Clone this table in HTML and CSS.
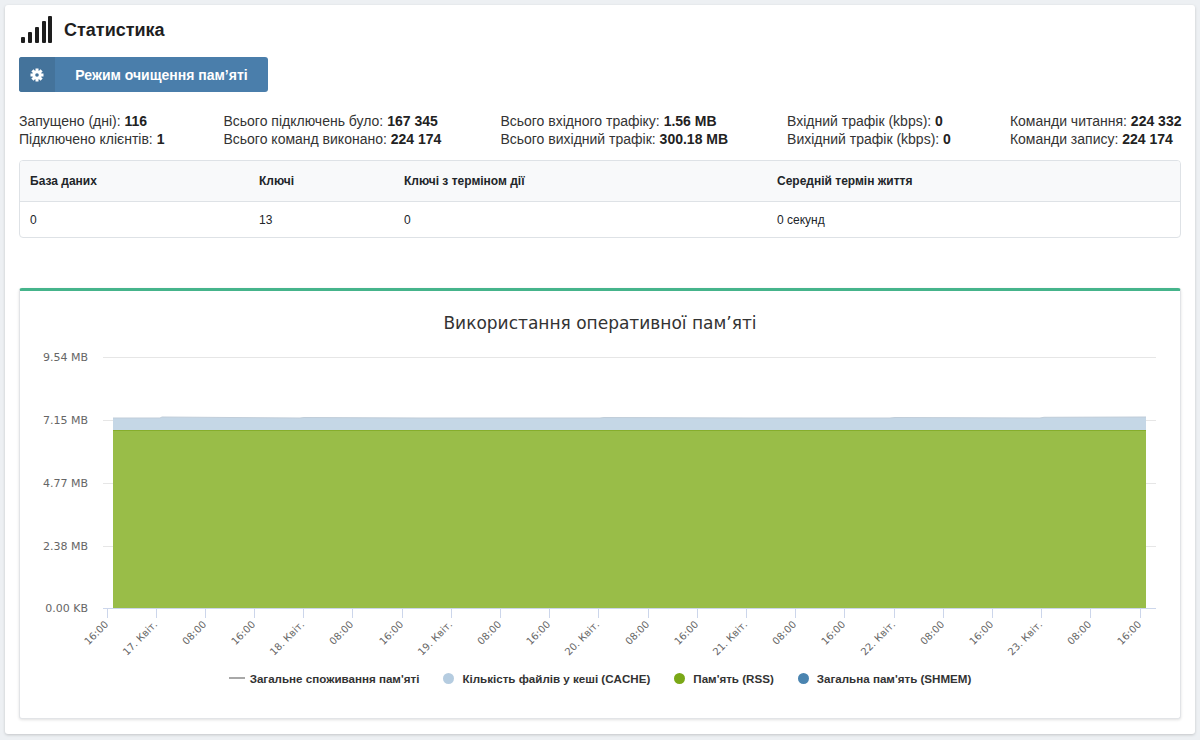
FILE: index.html
```html
<!DOCTYPE html>
<html lang="uk">
<head>
<meta charset="utf-8">
<title>Статистика</title>
<link rel="stylesheet" href="styles.css">
</head>
<body>
<div class="page-card">
  <div class="header">
    <svg class="signal" width="32" height="28" viewBox="0 0 32 28">
      <rect x="1" y="21" width="4" height="6" rx="1"/>
      <rect x="8" y="16" width="4" height="11" rx="1"/>
      <rect x="15" y="11" width="4" height="16" rx="1"/>
      <rect x="22" y="5" width="4" height="22" rx="1"/>
      <rect x="28" y="0" width="4" height="27" rx="1"/>
    </svg>
    <h1 class="title">Статистика</h1>
  </div>

  <button class="btn-labeled" type="button">
    <span class="btn-icon">
      <svg width="14" height="14" viewBox="-7 -7 14 14">
        <g fill="#fff">
          <circle r="4.6"/>
          <rect x="-1.5" y="-6.5" width="3" height="3"/>
          <rect x="-1.5" y="-6.5" width="3" height="3" transform="rotate(45)"/>
          <rect x="-1.5" y="-6.5" width="3" height="3" transform="rotate(90)"/>
          <rect x="-1.5" y="-6.5" width="3" height="3" transform="rotate(135)"/>
          <rect x="-1.5" y="-6.5" width="3" height="3" transform="rotate(180)"/>
          <rect x="-1.5" y="-6.5" width="3" height="3" transform="rotate(225)"/>
          <rect x="-1.5" y="-6.5" width="3" height="3" transform="rotate(270)"/>
          <rect x="-1.5" y="-6.5" width="3" height="3" transform="rotate(315)"/>
        </g>
        <circle r="1.8" fill="#44739b"/>
      </svg>
    </span>
    <span class="btn-text">Режим очищення пам’яті</span>
  </button>

  <div class="stats">
    <div class="stat-col">
      <div>Запущено (дні): <b>116</b></div>
      <div>Підключено клієнтів: <b>1</b></div>
    </div>
    <div class="stat-col">
      <div>Всього підключень було: <b>167 345</b></div>
      <div>Всього команд виконано: <b>224 174</b></div>
    </div>
    <div class="stat-col">
      <div>Всього вхідного трафіку: <b>1.56 MB</b></div>
      <div>Всього вихідний трафік: <b>300.18 MB</b></div>
    </div>
    <div class="stat-col">
      <div>Вхідний трафік (kbps): <b>0</b></div>
      <div>Вихідний трафік (kbps): <b>0</b></div>
    </div>
    <div class="stat-col">
      <div>Команди читання: <b>224 332</b></div>
      <div>Команди запису: <b>224 174</b></div>
    </div>
  </div>

  <div class="table-wrap">
    <table class="db-table">
      <colgroup>
        <col class="c1"><col class="c2"><col class="c3"><col>
      </colgroup>
      <thead>
        <tr><th>База даних</th><th>Ключі</th><th>Ключі з терміном дії</th><th>Середній термін життя</th></tr>
      </thead>
      <tbody>
        <tr><td>0</td><td>13</td><td>0</td><td>0 секунд</td></tr>
      </tbody>
    </table>
  </div>

  <div class="chart-card">
    <svg class="chart" width="1159" height="369" viewBox="20 291 1159 369">
      <text class="chart-title" x="600" y="329">Використання оперативної пам’яті</text>

      <g class="grid">
        <line x1="103" y1="357.5" x2="1156" y2="357.5"/>
        <line x1="103" y1="420.5" x2="1156" y2="420.5"/>
        <line x1="103" y1="483.5" x2="1156" y2="483.5"/>
        <line x1="103" y1="546.5" x2="1156" y2="546.5"/>
      </g>

      <g class="ylabels">
        <text x="88" y="361">9.54 MB</text>
        <text x="88" y="424">7.15 MB</text>
        <text x="88" y="487">4.77 MB</text>
        <text x="88" y="550">2.38 MB</text>
        <text x="88" y="612">0.00 KB</text>
      </g>

      <path class="area-cache" d="M113,418 L160,418 L162,417 L300,418 L304,417.5 L420,418 L600,418 L604,417.5 L750,418 L890,418 L895,417.5 L1040,418 L1044,417.3 L1146,417 L1146,430 L113,430 Z"/>
      <path class="line-total" d="M113,418 L160,418 L162,417 L300,418 L304,417.5 L420,418 L600,418 L604,417.5 L750,418 L890,418 L895,417.5 L1040,418 L1044,417.3 L1146,417"/>
      <path class="area-rss" d="M113,430 L1146,430 L1146,608 L113,608 Z"/>
      <path class="line-rss" d="M113,430.5 L1146,430.5"/>

      <line class="xaxis" x1="103" y1="608.5" x2="1156" y2="608.5"/>
      <g class="xticks">
        <line x1="107.5" y1="608" x2="107.5" y2="618"/>
        <line x1="156.5" y1="608" x2="156.5" y2="618"/>
        <line x1="205.5" y1="608" x2="205.5" y2="618"/>
        <line x1="254.5" y1="608" x2="254.5" y2="618"/>
        <line x1="303.5" y1="608" x2="303.5" y2="618"/>
        <line x1="352.5" y1="608" x2="352.5" y2="618"/>
        <line x1="402.5" y1="608" x2="402.5" y2="618"/>
        <line x1="451.5" y1="608" x2="451.5" y2="618"/>
        <line x1="500.5" y1="608" x2="500.5" y2="618"/>
        <line x1="549.5" y1="608" x2="549.5" y2="618"/>
        <line x1="598.5" y1="608" x2="598.5" y2="618"/>
        <line x1="648.5" y1="608" x2="648.5" y2="618"/>
        <line x1="697.5" y1="608" x2="697.5" y2="618"/>
        <line x1="746.5" y1="608" x2="746.5" y2="618"/>
        <line x1="795.5" y1="608" x2="795.5" y2="618"/>
        <line x1="844.5" y1="608" x2="844.5" y2="618"/>
        <line x1="894.5" y1="608" x2="894.5" y2="618"/>
        <line x1="943.5" y1="608" x2="943.5" y2="618"/>
        <line x1="992.5" y1="608" x2="992.5" y2="618"/>
        <line x1="1041.5" y1="608" x2="1041.5" y2="618"/>
        <line x1="1090.5" y1="608" x2="1090.5" y2="618"/>
        <line x1="1140.5" y1="608" x2="1140.5" y2="618"/>
      </g>
      <g class="xlabels">
        <text transform="translate(109,625) rotate(-45)">16:00</text>
        <text transform="translate(158,625) rotate(-45)">17. Квіт.</text>
        <text transform="translate(207,625) rotate(-45)">08:00</text>
        <text transform="translate(256,625) rotate(-45)">16:00</text>
        <text transform="translate(305,625) rotate(-45)">18. Квіт.</text>
        <text transform="translate(354,625) rotate(-45)">08:00</text>
        <text transform="translate(404,625) rotate(-45)">16:00</text>
        <text transform="translate(453,625) rotate(-45)">19. Квіт.</text>
        <text transform="translate(502,625) rotate(-45)">08:00</text>
        <text transform="translate(551,625) rotate(-45)">16:00</text>
        <text transform="translate(600,625) rotate(-45)">20. Квіт.</text>
        <text transform="translate(650,625) rotate(-45)">08:00</text>
        <text transform="translate(699,625) rotate(-45)">16:00</text>
        <text transform="translate(748,625) rotate(-45)">21. Квіт.</text>
        <text transform="translate(797,625) rotate(-45)">08:00</text>
        <text transform="translate(846,625) rotate(-45)">16:00</text>
        <text transform="translate(896,625) rotate(-45)">22. Квіт.</text>
        <text transform="translate(945,625) rotate(-45)">08:00</text>
        <text transform="translate(994,625) rotate(-45)">16:00</text>
        <text transform="translate(1043,625) rotate(-45)">23. Квіт.</text>
        <text transform="translate(1092,625) rotate(-45)">08:00</text>
        <text transform="translate(1142,625) rotate(-45)">16:00</text>
      </g>
    </svg>
    <div class="legend">
      <div class="legend-item"><span class="sym-line"></span>Загальне споживання пам'яті</div>
      <div class="legend-item"><span class="sym-dot dot-cache"></span>Кількість файлів у кеші (CACHE)</div>
      <div class="legend-item"><span class="sym-dot dot-rss"></span>Пам'ять (RSS)</div>
      <div class="legend-item"><span class="sym-dot dot-shmem"></span>Загальна пам'ять (SHMEM)</div>
    </div>
  </div>
</div>
</body>
</html>
```

FILE: styles.css
```css
html, body {
  margin: 0;
  padding: 0;
}
body {
  background: #edf0f3;
  font-family: "Liberation Sans", Arial, sans-serif;
  color: #333;
  height: 740px;
  overflow: hidden;
}
.page-card {
  margin: 5px;
  background: #fff;
  border-radius: 3px;
  box-shadow: 0 1px 3px rgba(0, 0, 0, 0.18);
  padding: 8px 14px 15px;
}
.header {
  display: flex;
  align-items: center;
  gap: 12px;
  height: 34px;
}
.signal {
  display: block;
  margin-left: 1px;
  fill: #1e1e1e;
}
.title {
  margin: 0;
  font-size: 18px;
  font-weight: bold;
  color: #1e1e1e;
}
.btn-labeled {
  display: flex;
  align-items: stretch;
  margin-top: 10px;
  width: 249px;
  height: 35px;
  padding: 0;
  border: none;
  border-radius: 3px;
  background: #4a7eab;
  color: #fff;
  font-family: "Liberation Sans", Arial, sans-serif;
  font-size: 14px;
  font-weight: bold;
  overflow: hidden;
}
.btn-icon {
  width: 36px;
  background: #44739b;
  display: flex;
  align-items: center;
  justify-content: center;
}
.btn-icon svg {
  display: block;
}
.btn-text {
  flex: 1;
  display: flex;
  align-items: center;
  justify-content: center;
}
.stats {
  display: flex;
  gap: 59px;
  margin-top: 20px;
  font-size: 14px;
  line-height: 18px;
  color: #333;
}
.stat-col {
  flex-shrink: 0;
  white-space: nowrap;
}
.stats b {
  color: #222;
}
.table-wrap {
  margin-top: 12px;
  border: 1px solid #dee2e6;
  border-radius: 4px;
  overflow: hidden;
}
.db-table {
  width: 100%;
  border-collapse: collapse;
  font-size: 12px;
  color: #212529;
}
.db-table .c1 { width: 229px; }
.db-table .c2 { width: 145px; }
.db-table .c3 { width: 373px; }
.db-table th {
  text-align: left;
  font-weight: bold;
  height: 40px;
  padding: 0 0 0 10px;
  background: #f8f9fa;
  border-bottom: 1px solid #dee2e6;
}
.db-table td {
  height: 35px;
  padding: 0 0 0 10px;
}
.chart-card {
  margin-top: 50px;
  border: 1px solid #e2e4e7;
  border-top: 3px solid #45b48b;
  border-radius: 3px;
  box-shadow: 0 1px 3px rgba(0, 0, 0, 0.12);
  padding-bottom: 22px;
  background: #fff;
}
.chart {
  display: block;
}
.chart-title {
  font-family: "DejaVu Sans", Verdana, sans-serif;
  font-size: 17px;
  fill: #333;
  text-anchor: middle;
}
.grid line {
  stroke: #e6e6e6;
  stroke-width: 1;
}
.ylabels text {
  font-family: "DejaVu Sans", Verdana, sans-serif;
  font-size: 11px;
  fill: #666;
  text-anchor: end;
}
.area-cache {
  fill: #c5d7e6;
}
.line-total {
  fill: none;
  stroke: #c0cdd9;
  stroke-width: 1;
}
.area-rss {
  fill: #99bd48;
}
.line-rss {
  stroke: #86ad2c;
  stroke-width: 1;
}
.xaxis {
  stroke: #ccd6eb;
  stroke-width: 1;
}
.xticks line {
  stroke: #ccd6eb;
  stroke-width: 1;
}
.xlabels text {
  font-family: "DejaVu Sans", Verdana, sans-serif;
  font-size: 10px;
  fill: #666;
  text-anchor: end;
}
.legend {
  height: 36px;
  display: flex;
  justify-content: center;
  align-items: center;
  gap: 24px;
  font-family: "Liberation Sans", Arial, sans-serif;
  font-size: 11.6px;
  font-weight: bold;
  color: #333;
}
.legend-item {
  display: flex;
  align-items: center;
}
.sym-line {
  width: 16px;
  height: 2px;
  background: #a8a8a8;
  margin-right: 5px;
}
.sym-dot {
  width: 11px;
  height: 11px;
  border-radius: 50%;
  margin-right: 8px;
}
.dot-cache { background: #b5cce0; }
.dot-rss { background: #7aa817; }
.dot-shmem { background: #4a84b0; }
```
